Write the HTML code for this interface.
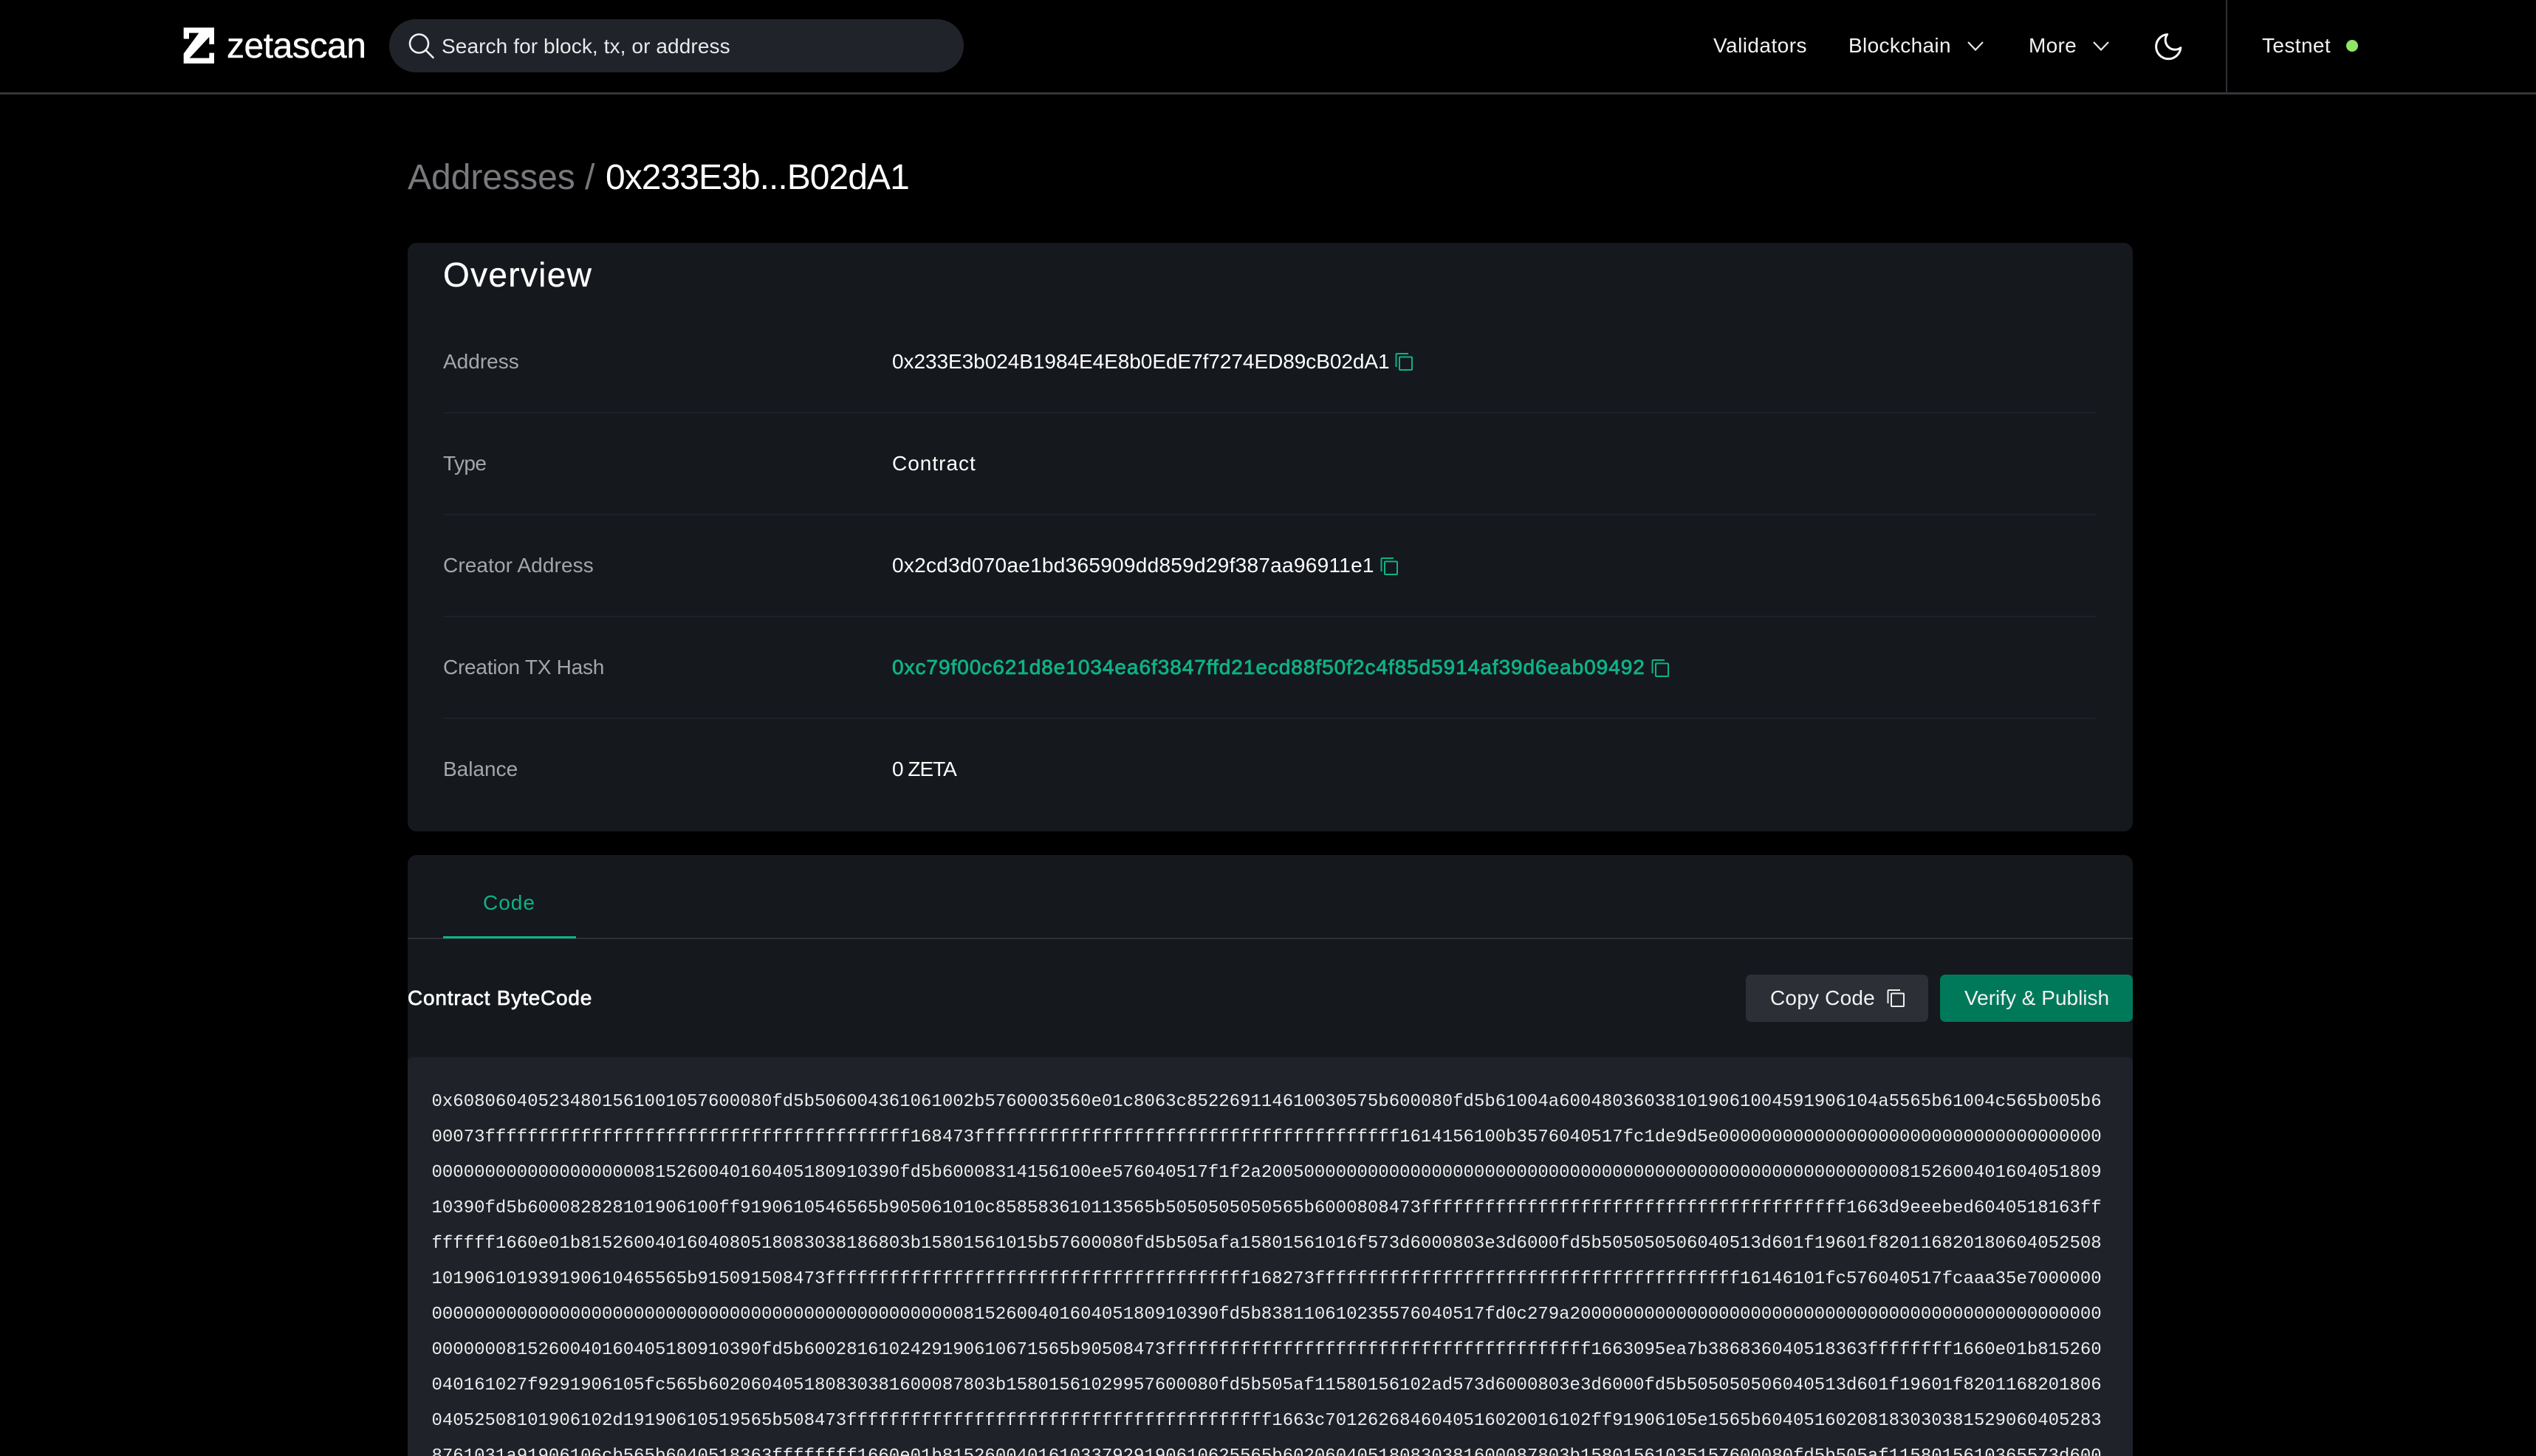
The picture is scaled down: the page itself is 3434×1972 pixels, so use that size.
<!DOCTYPE html>
<html><head><meta charset="utf-8"><title>Zetascan</title>
<style>
html,body{margin:0;padding:0;background:#000;width:3434px;height:1972px;overflow:hidden}
body{position:relative;font-family:"Liberation Sans",sans-serif;color:#fff}
.a{position:absolute}
.t{position:absolute;white-space:nowrap;line-height:40px;font-size:28px}
.l{color:#a4a6aa;left:600px}
.v{left:1208px;color:#fff}
.sep{position:absolute;left:601px;width:2237px;height:2px;background:#1e2127}
.code{position:absolute;left:584.5px;top:1469px;font:24px/48px "Liberation Mono",monospace;color:#eceded;white-space:pre}
svg{position:absolute;overflow:visible}
</style></head><body>

<div class="a" style="left:0;top:125px;width:3434px;height:3px;background:#34353a"></div>
<div class="a" style="left:3014px;top:0;width:2px;height:126px;background:#2e2f33"></div>

<svg style="left:230px;top:20px" width="300" height="80" viewBox="0 0 900 240"><polygon fill="#fff" points="56,52 180,52 180,120 160,120 160,90 80,176 160,176 160,155 180,155 180,198 56,198 56,158 118,74 78,74 78,98 56,98"/></svg>
<div class="t" style="left:307px;top:39px;font-size:48px;line-height:48px;letter-spacing:-.45px;-webkit-text-stroke:.4px #fff">zetascan</div>

<div class="a" style="left:527px;top:26px;width:778px;height:72px;border-radius:36px;background:#20232a"></div>
<svg style="left:550px;top:42px" width="42" height="40" viewBox="0 0 42 40" fill="none" stroke="#f0f0f0" stroke-width="2.6" stroke-linecap="round"><circle cx="17.5" cy="17" r="12.5"/><path d="M26.5 26l10 10"/></svg>
<div class="t" style="left:598px;top:43px;letter-spacing:.1px;color:#e8e9ea">Search for block, tx, or address</div>

<div class="t" style="left:2320px;top:42px;letter-spacing:.45px;color:#f2f2f2">Validators</div>
<div class="t" style="left:2503px;top:42px;letter-spacing:.35px;color:#f2f2f2">Blockchain</div>
<svg style="left:2664px;top:56px" width="22" height="13" viewBox="0 0 22 13" fill="none" stroke="#e6e6e6" stroke-width="2.2"><path d="M1 1l10 10.5L21 1"/></svg>
<div class="t" style="left:2747px;top:42px;letter-spacing:.3px;color:#f2f2f2">More</div>
<svg style="left:2834px;top:56px" width="22" height="13" viewBox="0 0 22 13" fill="none" stroke="#e6e6e6" stroke-width="2.2"><path d="M1 1l10 10.5L21 1"/></svg>
<svg style="left:2913.5px;top:40.5px" width="44.4" height="44.4" viewBox="0 0 24 24" fill="none" stroke="#fff" stroke-width="1.6" stroke-linejoin="round"><path d="M21 12.79A9 9 0 1 1 11.21 3 7 7 0 0 0 21 12.79z"/></svg>
<div class="t" style="left:3063px;top:42px;letter-spacing:.4px;color:#f2f2f2">Testnet</div>
<div class="a" style="left:3177px;top:54px;width:16px;height:16px;border-radius:50%;background:#8fe565"></div>

<div class="t" style="left:552px;top:216px;font-size:48px;line-height:50px;color:#77797d">Addresses /</div>
<div class="t" style="left:820px;top:216px;font-size:48px;line-height:50px;letter-spacing:-.95px">0x233E3b...B02dA1</div>

<div class="a" style="left:552px;top:329px;width:2336px;height:797px;background:#15181d;border-radius:12px"></div>
<div class="t" style="left:600px;top:347px;font-size:46px;line-height:50px;letter-spacing:1.3px;-webkit-text-stroke:.3px #fff">Overview</div>

<div class="t l" style="top:470px">Address</div>
<div class="t v" style="top:470px;letter-spacing:-.05px">0x233E3b024B1984E4E8b0EdE7f7274ED89cB02dA1</div>
<svg style="left:1889px;top:478px" width="24" height="24" viewBox="0 0 24 24" fill="none" stroke="#0db387" stroke-width="2"><rect x="6" y="5.5" width="17" height="17.5" rx="1"/><path d="M1.5 19V2a1 1 0 0 1 1-1H18"/></svg>
<div class="sep" style="top:558px"></div>

<div class="t l" style="top:608px;letter-spacing:-.6px">Type</div>
<div class="t v" style="top:608px;letter-spacing:1px">Contract</div>
<div class="sep" style="top:696px"></div>

<div class="t l" style="top:746px;letter-spacing:.1px">Creator Address</div>
<div class="t v" style="top:746px;letter-spacing:.28px">0x2cd3d070ae1bd365909dd859d29f387aa96911e1</div>
<svg style="left:1869px;top:755px" width="24" height="24" viewBox="0 0 24 24" fill="none" stroke="#0db387" stroke-width="2"><rect x="6" y="5.5" width="17" height="17.5" rx="1"/><path d="M1.5 19V2a1 1 0 0 1 1-1H18"/></svg>
<div class="sep" style="top:834px"></div>

<div class="t l" style="top:884px;letter-spacing:-.25px">Creation TX Hash</div>
<div class="t v" style="top:884px;letter-spacing:.95px;color:#0db387;-webkit-text-stroke:.8px #0db387">0xc79f00c621d8e1034ea6f3847ffd21ecd88f50f2c4f85d5914af39d6eab09492</div>
<svg style="left:2236px;top:893px" width="24" height="24" viewBox="0 0 24 24" fill="none" stroke="#0db387" stroke-width="2"><rect x="6" y="5.5" width="17" height="17.5" rx="1"/><path d="M1.5 19V2a1 1 0 0 1 1-1H18"/></svg>
<div class="sep" style="top:972px"></div>

<div class="t l" style="top:1022px">Balance</div>
<div class="t v" style="top:1022px;letter-spacing:-1px">0 ZETA</div>

<div class="a" style="left:552px;top:1158px;width:2336px;height:900px;background:#15181d;border-radius:12px"></div>
<div class="t" style="left:654px;top:1203px;letter-spacing:1px;color:#0db387">Code</div>
<div class="a" style="left:552px;top:1270px;width:2336px;height:2px;background:#2c2f34"></div>
<div class="a" style="left:600px;top:1268px;width:180px;height:3px;background:#0db387"></div>

<div class="t" style="left:552px;top:1332px;letter-spacing:.8px;-webkit-text-stroke:.7px #fff">Contract ByteCode</div>

<div class="a" style="left:2364px;top:1320px;width:247px;height:64px;background:#2c2f36;border-radius:7px"></div>
<div class="t" style="left:2397px;top:1332px;letter-spacing:.2px;color:#f2f2f2">Copy Code</div>
<svg style="left:2555px;top:1340px" width="24" height="24" viewBox="0 0 24 24" fill="none" stroke="#f0f0f0" stroke-width="2"><rect x="6" y="5.5" width="17" height="17.5" rx="1"/><path d="M1.5 19V2a1 1 0 0 1 1-1H18"/></svg>
<div class="a" style="left:2627px;top:1320px;width:261px;height:64px;background:#00795a;border-radius:7px"></div>
<div class="t" style="left:2660px;top:1332px;letter-spacing:0;color:#f2f2f2">Verify &amp; Publish</div>

<div class="a" style="left:552px;top:1432px;width:2336px;height:560px;background:#1f2229;border-radius:6px 6px 0 0"></div>
<div class="code">0x608060405234801561001057600080fd5b506004361061002b5760003560e01c8063c852269114610030575b600080fd5b61004a600480360381019061004591906104a5565b61004c565b005b6
00073ffffffffffffffffffffffffffffffffffffffff168473ffffffffffffffffffffffffffffffffffffffff1614156100b3576040517fc1de9d5e000000000000000000000000000000000000
00000000000000000000815260040160405180910390fd5b60008314156100ee576040517f1f2a2005000000000000000000000000000000000000000000000000000000008152600401604051809
10390fd5b600082828101906100ff9190610546565b905061010c858583610113565b5050505050565b6000808473ffffffffffffffffffffffffffffffffffffffff1663d9eeebed6040518163ff
ffffff1660e01b8152600401604080518083038186803b15801561015b57600080fd5b505afa15801561016f573d6000803e3d6000fd5b505050506040513d601f19601f820116820180604052508
101906101939190610465565b915091508473ffffffffffffffffffffffffffffffffffffffff168273ffffffffffffffffffffffffffffffffffffffff16146101fc576040517fcaaa35e7000000
00000000000000000000000000000000000000000000000000815260040160405180910390fd5b838110610235576040517fd0c279a20000000000000000000000000000000000000000000000000
0000000815260040160405180910390fd5b6002816102429190610671565b90508473ffffffffffffffffffffffffffffffffffffffff1663095ea7b386836040518363ffffffff1660e01b815260
040161027f9291906105fc565b602060405180830381600087803b15801561029957600080fd5b505af11580156102ad573d6000803e3d6000fd5b505050506040513d601f19601f8201168201806
04052508101906102d19190610519565b508473ffffffffffffffffffffffffffffffffffffffff1663c7012626846040516020016102ff91906105e1565b60405160208183030381529060405283
8761031a91906106cb565b6040518363ffffffff1660e01b8152600401610337929190610625565b602060405180830381600087803b15801561035157600080fd5b505af1158015610365573d600</div>
</body></html>
